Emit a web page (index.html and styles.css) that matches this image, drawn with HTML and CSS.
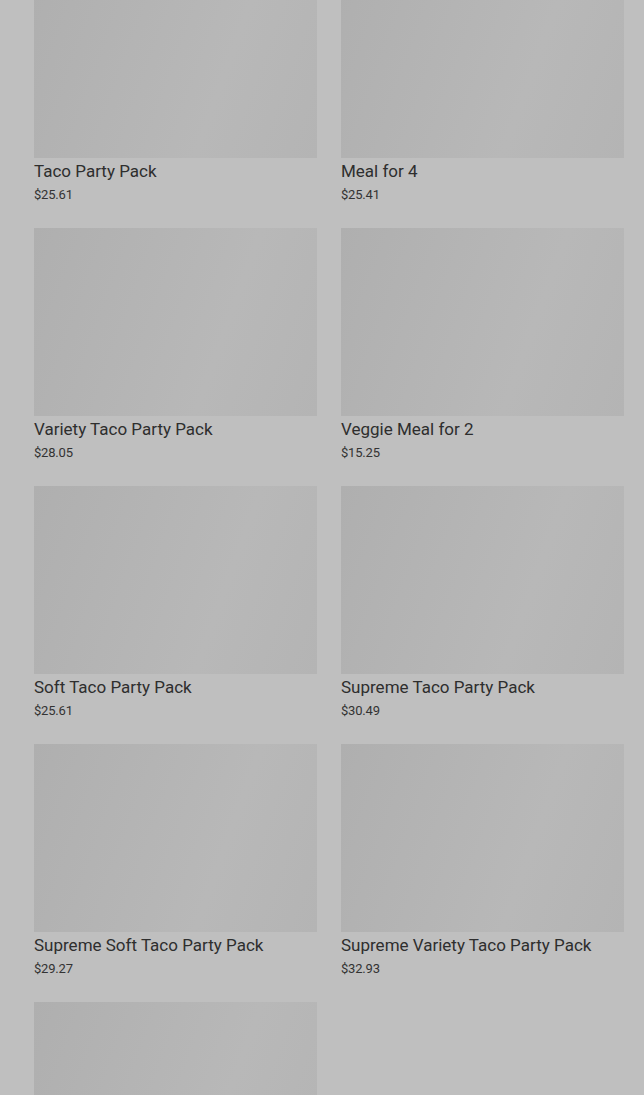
FILE: index.html
```html
<!DOCTYPE html>
<html lang="en">
<head>
    <meta charset="UTF-8">
    <meta name="viewport" content="width=device-width, initial-scale=1.0">
    <title>Party Packs</title>
    <link rel="stylesheet" href="styles.css">
</head>
<body>
    <div class="product-grid">
        <div class="product">
            <div class="product-image"></div>
            <h3>Taco Party Pack</h3>
            <p class="price">$25.61</p>
        </div>
        <div class="product">
            <div class="product-image"></div>
            <h3>Meal for 4</h3>
            <p class="price">$25.41</p>
        </div>
        <div class="product">
            <div class="product-image"></div>
            <h3>Variety Taco Party Pack</h3>
            <p class="price">$28.05</p>
        </div>
        <div class="product">
            <div class="product-image"></div>
            <h3>Veggie Meal for 2</h3>
            <p class="price">$15.25</p>
        </div>
        <div class="product">
            <div class="product-image"></div>
            <h3>Soft Taco Party Pack</h3>
            <p class="price">$25.61</p>
        </div>
        <div class="product">
            <div class="product-image"></div>
            <h3>Supreme Taco Party Pack</h3>
            <p class="price">$30.49</p>
        </div>
        <div class="product">
            <div class="product-image"></div>
            <h3>Supreme Soft Taco Party Pack</h3>
            <p class="price">$29.27</p>
        </div>
        <div class="product">
            <div class="product-image"></div>
            <h3>Supreme Variety Taco Party Pack</h3>
            <p class="price">$32.93</p>
        </div>
        <div class="product">
            <div class="product-image"></div>
        </div>
    </div>
</body>
</html>
```

FILE: styles.css
```css
body {
    font-family: Roboto, "Liberation Sans", sans-serif;
    margin: 0;
    padding: 0;
    background-color: #bfbfbf;
    color: #333;
    overflow: hidden;
}

.product-grid {
    display: grid;
    grid-template-columns: 283px 283px;
    column-gap: 24px;
    row-gap: 23px;
    padding-left: 34px;
    margin-top: -30px;
}

.product-image {
    height: 188px;
    background: linear-gradient(110deg, #afafaf 0%, #b8b8b8 65%, #b4b4b4 100%);
}

.product h3 {
    font-size: 17px;
    font-weight: 400;
    line-height: 22px;
    margin: 2px 0 0;
    color: #2e2e2e;
}

.price {
    font-size: 13px;
    line-height: 20px;
    letter-spacing: -0.2px;
    margin: 3px 0 0;
    color: #333;
}
```
